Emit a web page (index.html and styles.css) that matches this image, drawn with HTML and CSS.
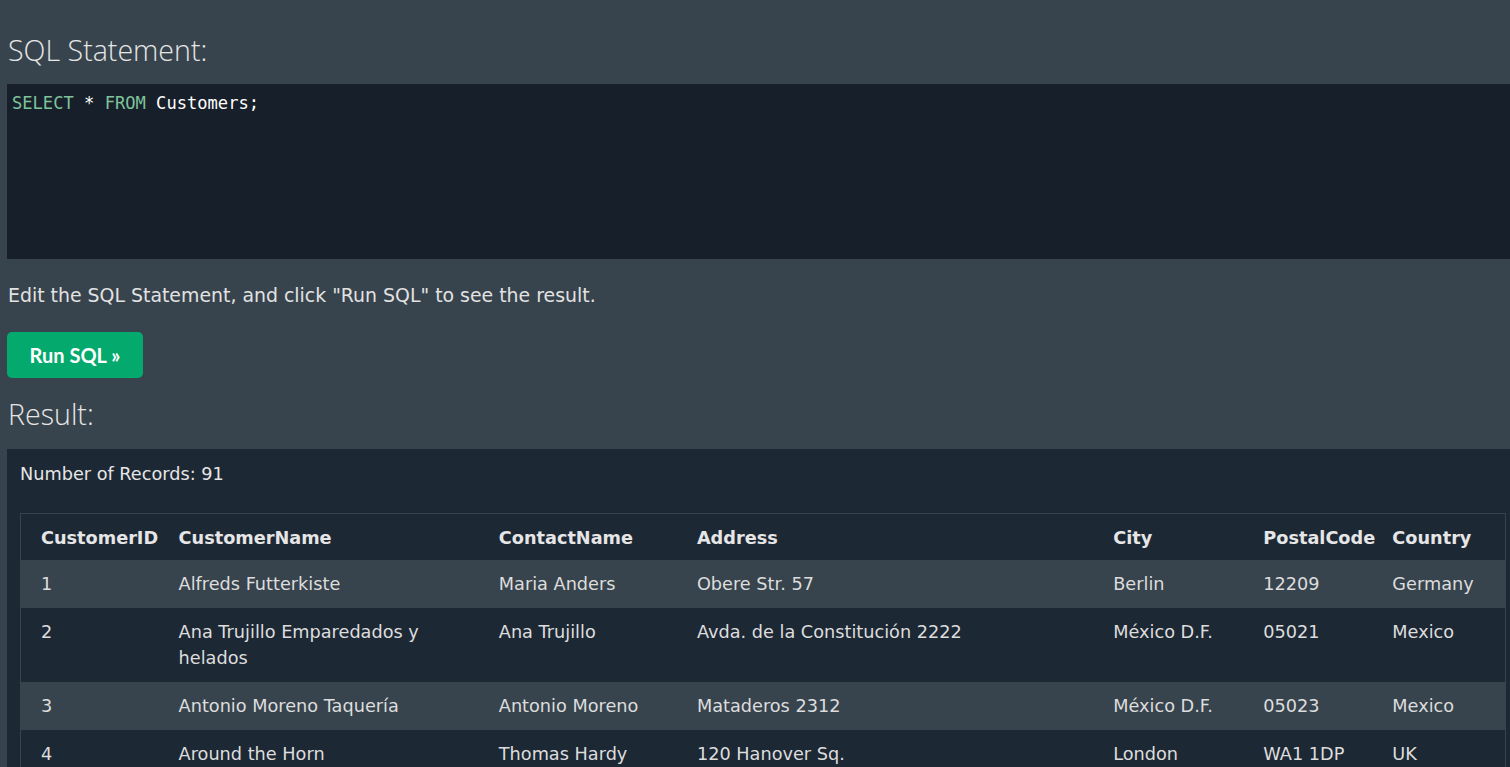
FILE: index.html
```html
<!DOCTYPE html>
<html>
<head>
<meta charset="utf-8">
<link rel="stylesheet" href="styles.css">
</head>
<body>
<div class="page">
  <h2 class="title">SQL Statement:</h2>
  <div class="editor"><span class="kw">SELECT</span> * <span class="kw">FROM</span> Customers;</div>
  <p class="hint">Edit the SQL Statement, and click "Run SQL" to see the result.</p>
  <button class="run">Run SQL »</button>
  <h2 class="title result-title">Result:</h2>
  <div class="result">
    <div class="count">Number of Records: 91</div>
    <table class="grid">
      <colgroup>
        <col class="c1"><col class="c2"><col class="c3"><col class="c4"><col class="c5"><col class="c6"><col class="c7">
      </colgroup>
      <thead>
        <tr><th>CustomerID</th><th>CustomerName</th><th>ContactName</th><th>Address</th><th>City</th><th>PostalCode</th><th>Country</th></tr>
      </thead>
      <tbody>
        <tr><td>1</td><td>Alfreds Futterkiste</td><td>Maria Anders</td><td>Obere Str. 57</td><td>Berlin</td><td>12209</td><td>Germany</td></tr>
        <tr><td>2</td><td>Ana Trujillo Emparedados y helados</td><td>Ana Trujillo</td><td>Avda. de la Constitución 2222</td><td>México D.F.</td><td>05021</td><td>Mexico</td></tr>
        <tr><td>3</td><td>Antonio Moreno Taquería</td><td>Antonio Moreno</td><td>Mataderos 2312</td><td>México D.F.</td><td>05023</td><td>Mexico</td></tr>
        <tr><td>4</td><td>Around the Horn</td><td>Thomas Hardy</td><td>120 Hanover Sq.</td><td>London</td><td>WA1 1DP</td><td>UK</td></tr>
      </tbody>
    </table>
  </div>
</div>
</body>
</html>
```
FILE: styles.css
```css
html, body {
  margin: 0;
  padding: 0;
  background: #38444d;
  overflow: hidden;
}
.page {
  width: 1520px;
  padding-left: 7px;
  padding-top: 28px;
  color: #dddddd;
  font-family: "DejaVu Sans", Verdana, sans-serif;
}
.title {
  margin: 0;
  padding-left: 1px;
  font-family: "Open Sans", "Segoe UI", sans-serif;
  font-weight: 300;
  font-size: 28.6px;
  line-height: 44px;
  color: #e6e6e6;
}
.editor {
  margin-top: 12px;
  height: 175px;
  box-sizing: border-box;
  padding: 8px 5px;
  background: #17202a;
  font-family: "DejaVu Sans Mono", Consolas, monospace;
  font-size: 17.1px;
  line-height: 22px;
  color: #ffffff;
}
.kw { color: #7fc29b; }
.hint {
  margin: 24px 0 0;
  padding-left: 1px;
  font-size: 18.9px;
  line-height: 24px;
  color: #e2e2e2;
}
.run {
  display: block;
  margin-top: 25px;
  width: 136px;
  height: 46px;
  border: none;
  border-radius: 5px;
  background: #04aa6d;
  color: #ffffff;
  font-family: "Lato", "Open Sans", sans-serif;
  font-weight: 700;
  font-size: 20px;
  cursor: pointer;
}
.result-title { margin-top: 14px; }
.result {
  margin-top: 13px;
  background: #1d2835;
  padding: 12px 13px 0;
}
.count {
  font-size: 17.7px;
  line-height: 26px;
  color: #e6e6e6;
}
.grid {
  margin-top: 26px;
  width: 1486px;
  table-layout: fixed;
  border-collapse: collapse;
  border: 1px solid #39434e;
  font-size: 17.7px;
  color: #dddddd;
}
.c1 { width: 150px; }
.c2 { width: 320px; }
.c3 { width: 198px; }
.c4 { width: 416px; }
.c5 { width: 150px; }
.c6 { width: 129px; }
.c7 { width: 121px; }
.grid th, .grid td {
  text-align: left;
  vertical-align: top;
  padding: 11px 8px;
  line-height: 26px;
}
.grid th:first-child, .grid td:first-child { padding-left: 20px; }
.grid th {
  font-weight: 700;
  padding-top: 11px;
  padding-bottom: 9px;
  color: #e6e6e6;
}
.grid tbody tr:nth-child(odd) { background: #38444d; }
.grid tbody tr:nth-child(even) { background: #1d2835; }
```
